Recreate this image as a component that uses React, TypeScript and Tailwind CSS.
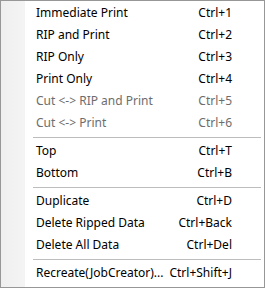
type Item = { label: string; keys: string; disabled?: boolean } | "sep";

const items: Item[] = [
  { label: "Immediate Print", keys: "Ctrl+1" },
  { label: "RIP and Print", keys: "Ctrl+2" },
  { label: "RIP Only", keys: "Ctrl+3" },
  { label: "Print Only", keys: "Ctrl+4" },
  { label: "Cut <-> RIP and Print", keys: "Ctrl+5", disabled: true },
  { label: "Cut <-> Print", keys: "Ctrl+6", disabled: true },
  "sep",
  { label: "Top", keys: "Ctrl+T" },
  { label: "Bottom", keys: "Ctrl+B" },
  "sep",
  { label: "Duplicate", keys: "Ctrl+D" },
  { label: "Delete Ripped Data", keys: "Ctrl+Back" },
  { label: "Delete All Data", keys: "Ctrl+Del" },
  "sep",
  { label: "Recreate(JobCreator)...", keys: "Ctrl+Shift+J" },
];

export default function App() {
  return (
    <div className="w-[265px] h-[288px] bg-white">
      <div
        className="relative h-full border border-[#979797] bg-white pt-px pb-[3px] text-[12px] text-black"
        style={{ fontFamily: '"Noto Sans", "Open Sans", sans-serif' }}
      >
        <div className="absolute left-0 top-0 bottom-0 w-[24px] bg-gradient-to-r from-[#efefef] to-[#f4f4f4]" />
        <div className="relative flex flex-col">
          {items.map((it, i) =>
            it === "sep" ? (
              <div key={i} className="h-[6px] flex items-center pl-[32px] pr-[3px]">
                <div className="h-px w-full bg-[#bdbdbd]" />
              </div>
            ) : (
              <div
                key={i}
                className={`h-[22px] flex items-center pl-[35px] pr-[32px] ${
                  it.disabled ? "text-[#6d6d6d]" : "text-black"
                }`}
              >
                <span className="flex-1 whitespace-nowrap">{it.label}</span>
                <span className="whitespace-nowrap">{it.keys}</span>
              </div>
            )
          )}
        </div>
      </div>
    </div>
  );
}
